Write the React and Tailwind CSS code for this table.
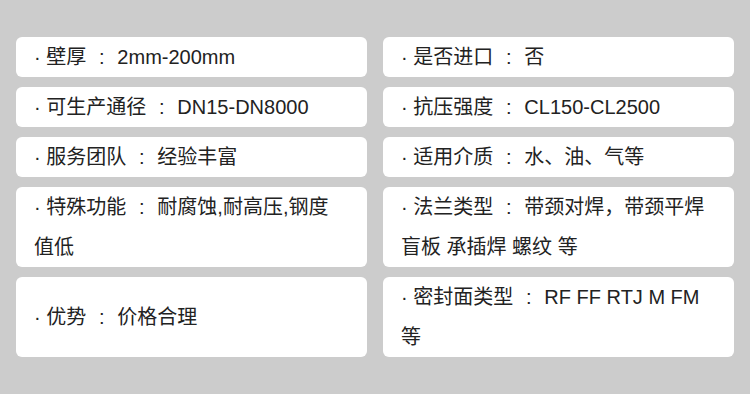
const rows = [
  [
    { label: "壁厚", value: "2mm-200mm" },
    { label: "是否进口", value: "否" },
  ],
  [
    { label: "可生产通径", value: "DN15-DN8000" },
    { label: "抗压强度", value: "CL150-CL2500" },
  ],
  [
    { label: "服务团队", value: "经验丰富" },
    { label: "适用介质", value: "水、油、气等" },
  ],
  [
    { label: "特殊功能", value: "耐腐蚀,耐高压,钢度值低" },
    { label: "法兰类型", value: "带颈对焊，带颈平焊盲板 承插焊 螺纹 等" },
  ],
  [
    { label: "优势", value: "价格合理" },
    { label: "密封面类型", value: "RF FF RTJ M FM 等" },
  ],
];

const heights = ["h-[40px]", "h-[40px]", "h-[40px]", "h-[80px]", "h-[80px]"];

function Card({ label, value }) {
  return (
    <div className="flex items-center rounded-[6px] bg-white pl-[18px] pr-[24px]">
      <p className="text-[20px] leading-[40px] text-[#222]">
        · {label}{" "}
        <span className="inline-block w-[20px] text-center">:</span>{" "}
        {value}
      </p>
    </div>
  );
}

export default function App() {
  return (
    <div
      className="min-h-[394px] w-[750px] bg-[#cccccc] px-4 pt-[37px] pb-[37px]"
      style={{ fontFamily: '"Liberation Sans", "Noto Sans CJK SC", sans-serif' }}
    >
      <div className="flex flex-col gap-[10px]">
        {rows.map((pair, i) => (
          <div key={i} className={`grid grid-cols-2 gap-4 ${heights[i]}`}>
            <Card {...pair[0]} />
            <Card {...pair[1]} />
          </div>
        ))}
      </div>
    </div>
  );
}
